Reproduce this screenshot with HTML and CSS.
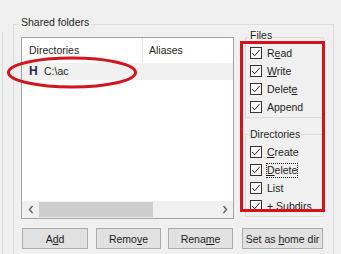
FILE: index.html
```html
<!DOCTYPE html>
<html lang="en">

<head>
    <meta charset="UTF-8">
    <meta name="viewport" content="width=device-width, initial-scale=1.0">
    <title>Shared folders</title>
    <link rel="stylesheet" href="styles.css">
</head>

<body>
    <div class="page">
        <div class="edge"></div>
        <div class="group shared">
            <div class="group-title">Shared folders</div>
            <div class="shared-body">
                <div class="listview">
                    <div class="lv-header">
                        <div class="lv-col col-dir">Directories</div>
                        <div class="lv-col col-alias">Aliases</div>
                    </div>
                    <div class="lv-row selected">
                        <span class="drive">H</span>
                        <span class="path">C:\ac</span>
                    </div>
                    <div class="hscroll">
                        <div class="sb-arrow">
                            <svg width="6" height="9" viewBox="0 0 6 9"><path d="M4.5 1 L1.5 4.5 L4.5 8" fill="none" stroke="#606060" stroke-width="1.4"/></svg>
                        </div>
                        <div class="sb-track"><div class="sb-thumb"></div></div>
                        <div class="sb-arrow">
                            <svg width="6" height="9" viewBox="0 0 6 9"><path d="M1.5 1 L4.5 4.5 L1.5 8" fill="none" stroke="#606060" stroke-width="1.4"/></svg>
                        </div>
                    </div>
                </div>

                <div class="perms">
                    <div class="group files">
                        <div class="group-title">Files</div>
                        <label class="check first"><svg class="box" width="12" height="12" viewBox="0 0 12 12"><rect x="0.5" y="0.5" width="11" height="11" fill="#fff" stroke="#333"/><path d="M2.2 6 L4.6 8.8 L9.8 2.8" fill="none" stroke="#222" stroke-width="1"/></svg><span>R<u>e</u>ad</span></label>
                        <label class="check"><svg class="box" width="12" height="12" viewBox="0 0 12 12"><rect x="0.5" y="0.5" width="11" height="11" fill="#fff" stroke="#333"/><path d="M2.2 6 L4.6 8.8 L9.8 2.8" fill="none" stroke="#222" stroke-width="1"/></svg><span><u>W</u>rite</span></label>
                        <label class="check"><svg class="box" width="12" height="12" viewBox="0 0 12 12"><rect x="0.5" y="0.5" width="11" height="11" fill="#fff" stroke="#333"/><path d="M2.2 6 L4.6 8.8 L9.8 2.8" fill="none" stroke="#222" stroke-width="1"/></svg><span>Delet<u>e</u></span></label>
                        <label class="check"><svg class="box" width="12" height="12" viewBox="0 0 12 12"><rect x="0.5" y="0.5" width="11" height="11" fill="#fff" stroke="#333"/><path d="M2.2 6 L4.6 8.8 L9.8 2.8" fill="none" stroke="#222" stroke-width="1"/></svg><span>Append</span></label>
                    </div>
                    <div class="group dirs">
                        <div class="group-title">Directories</div>
                        <label class="check first"><svg class="box" width="12" height="12" viewBox="0 0 12 12"><rect x="0.5" y="0.5" width="11" height="11" fill="#fff" stroke="#333"/><path d="M2.2 6 L4.6 8.8 L9.8 2.8" fill="none" stroke="#222" stroke-width="1"/></svg><span><u>C</u>reate</span></label>
                        <label class="check"><svg class="box" width="12" height="12" viewBox="0 0 12 12"><rect x="0.5" y="0.5" width="11" height="11" fill="#fff" stroke="#333"/><path d="M2.2 6 L4.6 8.8 L9.8 2.8" fill="none" stroke="#222" stroke-width="1"/></svg><span class="focused"><u>D</u>elete</span></label>
                        <label class="check"><svg class="box" width="12" height="12" viewBox="0 0 12 12"><rect x="0.5" y="0.5" width="11" height="11" fill="#fff" stroke="#333"/><path d="M2.2 6 L4.6 8.8 L9.8 2.8" fill="none" stroke="#222" stroke-width="1"/></svg><span>List</span></label>
                        <label class="check"><svg class="box" width="12" height="12" viewBox="0 0 12 12"><rect x="0.5" y="0.5" width="11" height="11" fill="#fff" stroke="#333"/><path d="M2.2 6 L4.6 8.8 L9.8 2.8" fill="none" stroke="#222" stroke-width="1"/></svg><span>+ Subdirs</span></label>
                    </div>
                </div>
            </div>

            <div class="buttons">
                <button class="btn btn-add">A<u>d</u>d</button>
                <button class="btn btn-remove">Remo<u>v</u>e</button>
                <button class="btn btn-rename">Rena<u>m</u>e</button>
                <button class="btn btn-home">Set as <u>h</u>ome dir</button>
            </div>
        </div>
    </div>

    <!-- red annotations drawn over the dialog -->
    <svg class="mark-ellipse" width="341" height="254" viewBox="0 0 341 254">
        <ellipse cx="72" cy="72.5" rx="63.5" ry="14.5" fill="none" stroke="#cf151d" stroke-width="3"/>
    </svg>
    <div class="mark-box"></div>
</body>

</html>
```

FILE: styles.css
```css
body {
    margin: 0;
    background: #f0f0f0;
    font-family: 'Liberation Sans', Arial, sans-serif;
    font-size: 10.5px;
    color: #1e1e1e;
    width: 341px;
    height: 254px;
    overflow: hidden;
    position: relative;
}

.page {
    display: flex;
    height: 254px;
    overflow: hidden;
}

.edge {
    width: 2px;
    margin-top: 32px;
    border-right: 1px solid #d9d9d9;
    flex-shrink: 0;
}

/* group boxes */
.group {
    border: 1px solid #dcdcdc;
    box-sizing: border-box;
}

.group-title {
    width: fit-content;
    line-height: 15px;
    height: 15px;
    padding: 0 2px;
    background: #f0f0f0;
    white-space: nowrap;
}

.shared {
    margin-top: 24px;
    margin-left: 10px;
    width: 321px;
    height: 250px;
    padding: 0 7px;
    flex-shrink: 0;
}

.shared > .group-title {
    margin: -10px 0 0 -2px;
}

.shared-body {
    display: flex;
    align-items: flex-start;
    margin-top: 7px;
}

/* list view */
.listview {
    width: 213px;
    height: 182px;
    box-sizing: border-box;
    border: 1px solid #a3a3a3;
    background: #fff;
    display: flex;
    flex-direction: column;
}

.lv-header {
    display: flex;
    height: 25px;
}

.lv-col {
    line-height: 25px;
    padding-left: 7px;
}

.col-dir {
    width: 113px;
    border-right: 1px solid #e5e5e5;
}

.col-alias {
    padding-left: 6px;
}

.lv-row {
    height: 17px;
    line-height: 17px;
    display: flex;
    align-items: center;
    padding-left: 7px;
}

.lv-row.selected {
    background: #f0f0f0;
}

.drive {
    font-weight: bold;
    font-size: 12px;
    color: #1c2a48;
    width: 15px;
}

.hscroll {
    margin-top: auto;
    height: 17px;
    display: flex;
    background: #f0f0f0;
}

.sb-arrow {
    width: 17px;
    display: flex;
    align-items: center;
    justify-content: center;
}

.sb-track {
    flex: 1;
    padding: 1px 0;
}

.sb-thumb {
    width: 114px;
    height: 100%;
    background: #cdcdcd;
}

/* permissions column */
.perms {
    margin-left: 11px;
    width: 79px;
    display: flex;
    flex-direction: column;
}

.files,
.dirs {
    padding: 0 0 1px 4px;
}

.files > .group-title {
    margin: -10px 0 0 -1px;
    padding: 0 1px;
}

.dirs {
    margin-top: 16px;
}

.dirs > .group-title {
    margin: -8px 0 0 -1px;
    padding: 0 1px;
}

.check {
    display: flex;
    align-items: center;
    height: 18px;
    gap: 5px;
    white-space: nowrap;
}

.check.first {
    margin-top: 1px;
}

.box {
    flex-shrink: 0;
}

.focused {
    outline: 1px dotted #222;
    outline-offset: 0;
    line-height: 13px;
}

/* buttons */
.buttons {
    display: flex;
    margin-top: 9px;
    padding-left: 1px;
    gap: 8px;
}

.btn {
    height: 21px;
    padding: 0;
    border: 1px solid #adadad;
    background: #e1e1e1;
    font-family: inherit;
    font-size: 10.5px;
    color: #1e1e1e;
}

.btn-add { width: 66px; }
.btn-remove { width: 65px; margin-right: -1px; }
.btn-rename { width: 65px; }
.btn-home { width: 81px; margin-left: 1px; }

/* annotations */
.mark-ellipse {
    position: absolute;
    left: 0;
    top: 0;
    pointer-events: none;
}

.mark-box {
    position: absolute;
    left: 240px;
    top: 41px;
    width: 85px;
    height: 171px;
    box-sizing: border-box;
    border: 3px solid #d4121b;
}
```
